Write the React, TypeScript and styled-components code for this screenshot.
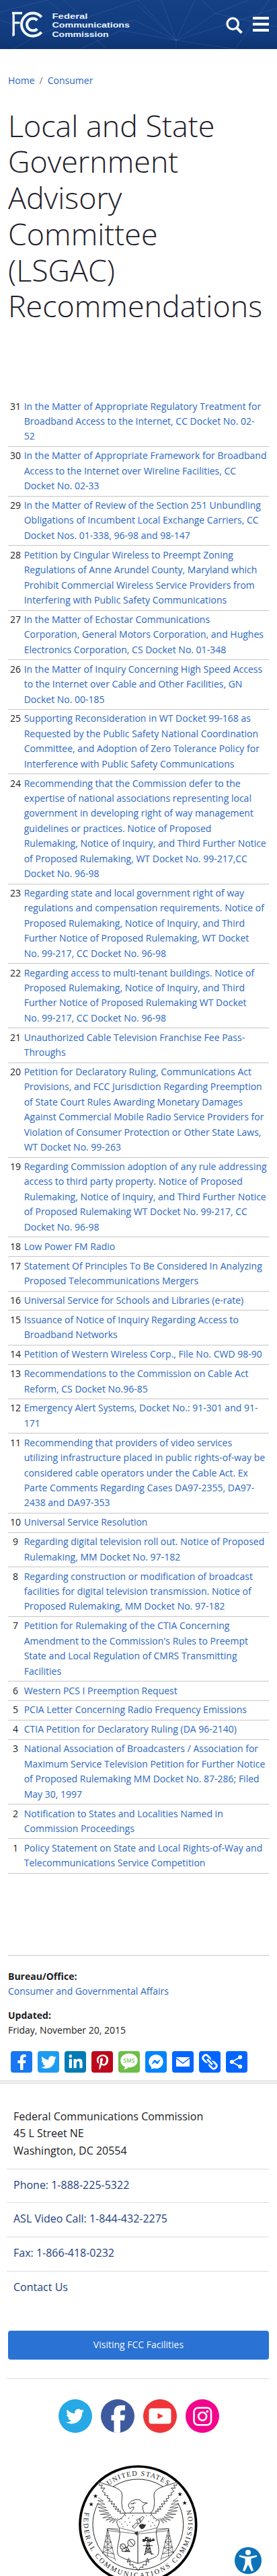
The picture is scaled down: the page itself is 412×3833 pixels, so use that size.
import React from 'react';
import styled, { createGlobalStyle } from 'styled-components';
import {
  FaFacebookF,
  FaFacebookMessenger,
  FaLinkedinIn,
  FaPinterestP,
  FaTwitter,
} from 'react-icons/fa';

const colors = {
  link: '#2d68c2',
  navy: '#1d3f82',
  text: '#1b1b1e',
  rule: '#c6c6c6',
  softRule: '#dcdcdc',
  button: '#2a72d4',
};

const GlobalStyle = createGlobalStyle`
  * { box-sizing: border-box; }
  body {
    margin: 0;
    background: #fff;
    color: ${colors.text};
    font: 400 14px/22.4px 'Open Sans', sans-serif;
  }
  a { color: inherit; text-decoration: none; }
`;

const Page = styled.div`
  position: relative;
  height: 3833px;
  overflow: hidden;
`;

const Header = styled.header`
  position: relative;
  display: flex;
  align-items: flex-start;
  height: 73px;
  padding: 17px 12px 0 17px;
  background: linear-gradient(#154084 0%, #123c80 70%, #0d3470 100%);
  color: #fff;
`;

const HeaderPattern = styled.svg`
  position: absolute;
  inset: 0;
  width: 100%;
  height: 100%;
`;

const Logo = styled.svg`
  position: relative;
  width: 180px;
  height: 40px;
  text {
    font: 700 11.5px 'Liberation Sans', sans-serif;
    fill: #e9f3ff;
  }
`;

const HeaderActions = styled.div`
  position: relative;
  display: flex;
  gap: 15px;
  margin: 8px 0 0 auto;
`;

const SearchIcon = styled.svg`
  width: 25px;
  height: 26px;
`;

const MenuButton = styled.div`
  display: grid;
  gap: 5px;
  width: 24px;
  height: 22px;
`;

const MenuBar = styled.span`
  height: 4px;
  background: #fff;
`;

const Main = styled.main`
  padding: 36px 12px 0;
`;

const Breadcrumb = styled.nav`
  display: flex;
  gap: 7px;
  color: ${colors.link};
  span { color: #777; }
`;

const Title = styled.h1`
  margin: 28.2px 0 109px;
  font-size: 44.8px;
  font-weight: 300;
  line-height: 53.76px;
  color: #1f202b;
`;

const List = styled.div`
  display: flex;
  flex-direction: column;
`;

const Row = styled.div`
  display: grid;
  grid-template-columns: 22px 1fr;
  column-gap: 1.7px;
  padding: 2.4px 3px 3.15px 0;
  border-bottom: 1px solid ${colors.rule};
`;

const RowNumber = styled.span`
  text-align: center;
`;

const RowLink = styled.a`
  white-space: pre-line;
  color: ${colors.link};
`;

const Details = styled.section`
  display: grid;
  gap: 13.4px;
  margin-top: 121px;
  padding-top: 20px;
  border-top: 1px solid ${colors.rule};
`;

const Detail = styled.div`
  strong { display: block; }
  a { color: ${colors.link}; }
`;

const ShareRow = styled.div`
  display: flex;
  gap: 8px;
  margin: 19.2px 4px 0;
  padding-bottom: 12px;
`;

const ShareTile = styled.a<{ $color: string }>`
  display: grid;
  place-items: center;
  width: 32px;
  height: 32px;
  border-radius: 4px;
  background: ${(p) => p.$color};
  color: #fff;
`;

const TileArt = styled.svg`
  width: 32px;
  height: 32px;
  text { font: 600 8px 'Open Sans', sans-serif; }
`;

const Footer = styled.footer`
  padding: 24.5px 12px 0;
  border-top: 4px double #c9c9c9;
`;

const Contacts = styled.div`
  margin-left: -2px;
  font-size: 16px;
  line-height: 25.6px;
`;

const Address = styled.p`
  margin: 0;
  padding: 12px 10px 13.5px;
`;

const ContactLink = styled.a`
  display: block;
  padding: 11px 10px 13px;
  border-top: 1px solid ${colors.softRule};
  color: ${colors.navy};
`;

const VisitButton = styled.a`
  display: flex;
  align-items: center;
  justify-content: center;
  height: 42.4px;
  margin-top: 39px;
  border-radius: 4px;
  background: ${colors.button};
  color: #f4f8ff;
`;

const SocialRow = styled.div`
  display: flex;
  justify-content: center;
  gap: 13px;
  margin: 28.2px 0 0 -2px;
  padding: 30.7px 0 42.5px 2px;
  border-top: 1px solid ${colors.softRule};
`;

const SocialCircle = styled.a<{ $color: string }>`
  display: grid;
  place-items: center;
  width: 50px;
  height: 50px;
  border-radius: 50%;
  background: ${(p) => p.$color};
  color: #fff;
  overflow: hidden;
`;

const SocialArt = styled.svg`
  width: 50px;
  height: 50px;
`;

const SealArt = styled.svg`
  display: block;
  width: 186px;
  height: 186px;
  margin-left: 100px;
  overflow: visible;
  text {
    font-family: 'Liberation Serif', serif;
    fill: #151515;
  }
`;

const AccessButton = styled.a`
  position: absolute;
  right: 23px;
  bottom: 3px;
  width: 40px;
  height: 40px;
`;

const items: [number, string][] = [
  [31, 'In the Matter of Appropriate Regulatory Treatment for Broadband Access to the Internet, CC Docket No. 02-\n52'],
  [30, 'In the Matter of Appropriate Framework for Broadband Access to the Internet over Wireline Facilities, CC Docket No. 02-33'],
  [29, 'In the Matter of Review of the Section 251 Unbundling Obligations of Incumbent Local Exchange Carriers, CC Docket Nos. 01-338, 96-98 and 98-147'],
  [28, 'Petition by Cingular Wireless to Preempt Zoning Regulations of Anne Arundel County, Maryland which Prohibit Commercial Wireless Service Providers from Interfering with Public Safety Communications'],
  [27, 'In the Matter of Echostar Communications Corporation, General Motors Corporation, and Hughes Electronics Corporation, CS Docket No. 01-348'],
  [26, 'In the Matter of Inquiry Concerning High Speed Access to the Internet over Cable and Other Facilities, GN Docket No. 00-185'],
  [25, 'Supporting Reconsideration in WT Docket 99-168 as Requested by the Public Safety National Coordination Committee, and Adoption of Zero Tolerance Policy for Interference with Public Safety Communications'],
  [24, 'Recommending that the Commission defer to the expertise of national associations representing local government in developing right of way management guidelines or practices. Notice of Proposed Rulemaking, Notice of Inquiry, and Third Further Notice of Proposed Rulemaking, WT Docket No. 99-217,CC Docket No. 96-98'],
  [23, 'Regarding state and local government right of way regulations and compensation requirements. Notice of Proposed Rulemaking, Notice of Inquiry, and Third Further Notice of Proposed Rulemaking, WT Docket\nNo. 99-217, CC Docket No. 96-98'],
  [22, 'Regarding access to multi-tenant buildings. Notice of Proposed Rulemaking, Notice of Inquiry, and Third Further Notice of Proposed Rulemaking WT Docket\nNo. 99-217, CC Docket No. 96-98'],
  [21, 'Unauthorized Cable Television Franchise Fee Pass-Throughs'],
  [20, 'Petition for Declaratory Ruling, Communications Act Provisions, and FCC Jurisdiction Regarding Preemption of State Court Rules Awarding Monetary Damages Against Commercial Mobile Radio Service Providers for Violation of Consumer Protection or Other State Laws, WT Docket No. 99-263'],
  [19, 'Regarding Commission adoption of any rule addressing access to third party property. Notice of Proposed Rulemaking, Notice of Inquiry, and Third Further Notice of Proposed Rulemaking WT Docket No. 99-217, CC Docket No. 96-98'],
  [18, 'Low Power FM Radio'],
  [17, 'Statement Of Principles To Be Considered In Analyzing Proposed Telecommunications Mergers'],
  [16, 'Universal Service for Schools and Libraries (e-rate)'],
  [15, 'Issuance of Notice of Inquiry Regarding Access to Broadband Networks'],
  [14, 'Petition of Western Wireless Corp., File No. CWD 98-90'],
  [13, 'Recommendations to the Commission on Cable Act Reform, CS Docket No.96-85'],
  [12, 'Emergency Alert Systems, Docket No.: 91-301 and 91-171'],
  [11, 'Recommending that providers of video services utilizing infrastructure placed in public rights-of-way be considered cable operators under the Cable Act. Ex Parte Comments Regarding Cases DA97-2355, DA97-2438 and DA97-353'],
  [10, 'Universal Service Resolution'],
  [9, 'Regarding digital television roll out. Notice of Proposed Rulemaking, MM Docket No. 97-182'],
  [8, 'Regarding construction or modification of broadcast facilities for digital television transmission. Notice of Proposed Rulemaking, MM Docket No. 97-182'],
  [7, "Petition for Rulemaking of the CTIA Concerning Amendment to the Commission's Rules to Preempt State and Local Regulation of CMRS Transmitting Facilities"],
  [6, 'Western PCS I Preemption Request'],
  [5, 'PCIA Letter Concerning Radio Frequency Emissions'],
  [4, 'CTIA Petition for Declaratory Ruling (DA 96-2140)'],
  [3, 'National Association of Broadcasters / Association for Maximum Service Television Petition for Further Notice of Proposed Rulemaking MM Docket No. 87-286; Filed May 30, 1997'],
  [2, 'Notification to States and Localities Named in Commission Proceedings'],
  [1, 'Policy Statement on State and Local Rights-of-Way and Telecommunications Service Competition'],
];

function FccLogo() {
  return (
    <Logo viewBox="0 0 180 40" role="img" aria-label="FCC">
      <g fill="none" stroke="#f2faff">
        <path d="M1 2.5H16M3.2 1V35.5M3 16.8H12.5" strokeWidth="3.3" />
        <path d="M1.6 37.5V32H4.9V35.6Z" fill="#f2faff" stroke="none" />
        <path d="M44.7 8.3A17 17 0 1 0 44.7 30.9" strokeWidth="4" />
        <path d="M38.4 13.2A9 9 0 1 0 38.4 26" strokeWidth="4" />
      </g>
      <text x="60.5" y="11" textLength="53" lengthAdjust="spacingAndGlyphs">Federal</text>
      <text x="60.5" y="24.3" textLength="115.5" lengthAdjust="spacingAndGlyphs">Communications</text>
      <text x="60.5" y="38" textLength="84" lengthAdjust="spacingAndGlyphs">Commission</text>
    </Logo>
  );
}

function SealHalf() {
  return (
    <g fill="none" stroke="#1a1a1a" strokeWidth="2.6">
      <path d="M104 91L163 109Q211 124 209 150Q204 184 210 208Q214 220 224 229" />
      <path d="M104 91L108 106L121 104L114 118L132 117L120 132L133 139L130 149L146 151L142 162L155 165L149 176L165 176L160 189L176 188L169 201L185 200L178 213L194 210L188 222L202 219L199 230L224 229" />
      <path
        d="M103 160L125 176L100 173L132 190L98 188L138 205L101 203L145 218L105 219L151 229L111 235L158 237L122 251L165 246L136 261L172 252L151 269L180 254L165 274L190 252"
        strokeWidth="1.8"
      />
      <path d="M224 229Q211 254 187 261Q181 272 196 295Q202 320 195 350Q182 400 192 417Q198 428 279 454" />
      <path d="M140 298L196 307M140 307L279 322M146 298L192 300M196 295L279 315" strokeWidth="1.8" />
      <path
        d="M144 300L122 410M144 300L179 441M144 300V424M137 330H153M132 356L160 358M127 381L166 384M122 404L172 412M137 330L160 358L127 381L172 412M153 330L132 356L166 384L122 404M130 414L177 433"
        strokeWidth="1.8"
      />
      <path d="M238 431L231 448L244 445L243 462L257 458L259 473L269 470L280 486" />
      <path d="M238 431L244 439" />
    </g>
  );
}

const stars = [
  [90, 153],
  [71, 190],
  [467, 145],
  [488, 184],
];
const shieldDots = [
  [207, 255], [224, 240], [239, 252], [222, 268], [244, 270], [207, 278], [256, 240], [232, 283],
  [255, 286], [213, 290], [318, 241], [336, 240], [349, 253], [327, 265], [346, 272], [361, 263],
  [314, 282], [337, 287], [354, 284], [198, 268],
];

function Seal() {
  return (
    <SealArt viewBox="0 0 558 558" role="img" aria-label="Commission seal">
      <defs>
        <path id="arcTop" d="M62 280A218 218 0 0 1 498 280" />
        <path id="arcBottom" d="M43 222A243 243 0 1 0 518 222" />
      </defs>
      <circle cx="280" cy="280" r="259" fill="#fff" stroke="#000" strokeWidth="11" />
      <circle cx="280" cy="280" r="202" fill="none" stroke="#111" strokeWidth="2.8" />
      <path d="M104 91L163 109L208 132L125 175L85 190L98 140Z M456 91L397 109L352 132L435 175L475 190L462 140Z" fill="#fff" />
      <text fontSize="31" textAnchor="middle">
        <textPath href="#arcTop" startOffset="50%" textLength="282">UNITED STATES</textPath>
      </text>
      <text fontSize="31">
        <textPath href="#arcBottom" startOffset="3" textLength="872">FEDERAL COMMUNICATIONS COMMISSION</textPath>
      </text>
      <SealHalf />
      <g transform="translate(560 0) scale(-1 1)">
        <SealHalf />
      </g>
      <path
        d="M224 229H336M243 228Q263 212 261 202Q250 200 245 210Q237 203 237 193Q243 174 270 169Q291 166 300 182L322 184Q303 190 300 201Q301 215 307 228M246 188L262 187L258 183M262 183L269 184"
        fill="none"
        stroke="#1a1a1a"
        strokeWidth="2.6"
      />
      {stars.map(([x, y]) => (
        <path
          key={x}
          transform={`translate(${x} ${y})`}
          d="M0-10L2.5-3H10L4 1.5L6.5 9L0 4.5L-6.5 9L-4 1.5L-10-3H-2.5Z"
          fill="#111"
        />
      ))}
      {shieldDots.map(([x, y]) => (
        <circle key={`${x}-${y}`} cx={x} cy={y} r="2.1" fill="#222" />
      ))}
      <g fill="#fff" stroke="#151515" strokeWidth="2.4">
        <path d="M284 260L299 243L307 250L291 268Z M255 291L272 272L280 280L263 298Z M274 259L287 253L294 270L281 277Z" />
        <path d="M285 288Q286 278 302 279L312 283Q309 300 294 299Z" fill="#333" />
        <path d="M279 315V454" strokeWidth="3" />
        <path d="M262 318L280 309L276 330Z" fill="#333" stroke="none" />
      </g>
      <g fill="none" stroke="#151515" strokeWidth="2.8">
        <circle cx="212" cy="378" r="12" />
        <circle cx="250" cy="362" r="16" />
        <path d="M203 370L220 387M240 350L261 374M220 386L230 381M240 372L229 380M231 380L222 403M231 380L243 403M226 392L239 402M238 392L224 402M209 390V400H245" />
        <path d="M324 345L310 416M324 345L341 416M318 372H330M315 388H334M312 402H337M318 372L334 388L312 402M330 372L315 388L337 402M303 374H345M306 416L324 404L350 413" />
        <path d="M324 358V335M306 352H345M313 337V353M334 340V355" strokeWidth="3.5" />
      </g>
      <g fill="#333">
        <circle cx="306" cy="351" r="7" />
        <circle cx="317" cy="340" r="5" />
        <circle cx="334" cy="352" r="7" />
        <circle cx="348" cy="349" r="6" />
      </g>
    </SealArt>
  );
}

export default function App() {
  return (
    <Page>
      <GlobalStyle />
      <Header>
        <HeaderPattern viewBox="0 0 412 73" aria-hidden>
          <path
            d="M0 18L70 0L160 73M20 73L60 50L205 0M60 50L0 30M205 0L262 60L320 20L412 40M262 60L180 45L120 73M262 60V73M262 60L200 30L140 42L95 0M262 60L240 0M262 60L290 0M262 60L350 73L400 0M320 20L300 0M320 20L370 0M205 8L262 60L412 12"
            fill="none"
            stroke="#86aee0"
            strokeOpacity=".16"
          />
        </HeaderPattern>
        <FccLogo />
        <HeaderActions>
          <SearchIcon viewBox="0 0 25 26" fill="none" stroke="#fff">
            <circle cx="10.2" cy="10.4" r="8.2" strokeWidth="3.2" />
            <path d="M15.8 16.2L23.4 23.8" strokeWidth="4" />
          </SearchIcon>
          <MenuButton>
            <MenuBar />
            <MenuBar />
            <MenuBar />
          </MenuButton>
        </HeaderActions>
      </Header>

      <Main>
        <Breadcrumb>
          <a>Home</a>
          <span>/</span>
          <a>Consumer</a>
        </Breadcrumb>
        <Title>Local and State Government Advisory Committee (LSGAC) Recommendations</Title>
        <List>
          {items.map(([n, label]) => (
            <Row key={n}>
              <RowNumber>{n}</RowNumber>
              <RowLink>{label}</RowLink>
            </Row>
          ))}
        </List>
        <Details>
          <Detail>
            <strong>Bureau/Office:</strong>
            <a>Consumer and Governmental Affairs</a>
          </Detail>
          <Detail>
            <strong>Updated:</strong>
            Friday, November 20, 2015
          </Detail>
        </Details>
        <ShareRow>
          <ShareTile $color="#1877f2">
            <FaFacebookF size={23} />
          </ShareTile>
          <ShareTile $color="#1d9bf0">
            <FaTwitter size={23} />
          </ShareTile>
          <ShareTile $color="#007bb5">
            <FaLinkedinIn size={23} />
          </ShareTile>
          <ShareTile $color="#bd081c">
            <FaPinterestP size={23} />
          </ShareTile>
          <ShareTile $color="#6cbe45">
            <TileArt viewBox="0 0 32 32">
              <path
                d="M16 3.5C8.8 3.5 3.3 8 3.3 14c0 4.5 2.7 7.7 6.6 9.3 0 1.7-.8 3-2.1 4 3 0 5.4-1.3 7-3C22.5 24.7 28.7 20.5 28.7 14 28.7 8 23.2 3.5 16 3.5Z"
                fill="#fff"
              />
              <text x="16" y="17" textAnchor="middle" fill="#6cbe45" textLength="17">SMS</text>
            </TileArt>
          </ShareTile>
          <ShareTile $color="#0084ff">
            <FaFacebookMessenger size={22} />
          </ShareTile>
          <ShareTile $color="#0166ff">
            <TileArt viewBox="0 0 32 32">
              <rect x="6" y="9" width="20" height="14" rx="1" fill="#fff" />
              <path d="M6 10.5L16 18L26 10.5" fill="none" stroke="#0166ff" strokeWidth="1.5" />
            </TileArt>
          </ShareTile>
          <ShareTile $color="#0166ff">
            <TileArt viewBox="0 0 32 32">
              <g transform="rotate(45 16 16)" fill="none" stroke="#fff" strokeWidth="2.8">
                <rect x="3.5" y="11.8" width="11" height="8.4" rx="3.5" />
                <rect x="17.5" y="11.8" width="11" height="8.4" rx="3.5" />
                <path d="M11.5 16H20.5" stroke="#0166ff" strokeWidth="6" />
                <path d="M10.5 16H21.5" />
              </g>
            </TileArt>
          </ShareTile>
          <ShareTile $color="#0166ff">
            <TileArt viewBox="0 0 32 32">
              <path d="M21.2 9L8.8 16L21.2 23" fill="none" stroke="#fff" strokeWidth="1.8" />
              <g fill="#fff">
                <circle cx="21.2" cy="9" r="3" />
                <circle cx="8.8" cy="16" r="3" />
                <circle cx="21.2" cy="23" r="3" />
              </g>
            </TileArt>
          </ShareTile>
        </ShareRow>
      </Main>

      <Footer>
        <Contacts>
          <Address>
            Federal Communications Commission
            <br />
            45 L Street NE
            <br />
            Washington, DC 20554
          </Address>
          <ContactLink>Phone: 1-888-225-5322</ContactLink>
          <ContactLink>ASL Video Call: 1-844-432-2275</ContactLink>
          <ContactLink>Fax: 1-866-418-0232</ContactLink>
          <ContactLink>Contact Us</ContactLink>
        </Contacts>
        <VisitButton>Visiting FCC Facilities</VisitButton>
        <SocialRow>
          <SocialCircle $color="#26a9e6">
            <FaTwitter size={27} />
          </SocialCircle>
          <SocialCircle $color="#3d5a9e">
            <SocialArt viewBox="0 0 50 50">
              <path
                d="M19.5 50V31.5H15.5V23.5H19.5V19C19.5 12.5 23.5 9 29.5 9H36V16.5H32C29.7 16.5 29 17.7 29 19.8V23.5H36L35 31.5H29V50Z"
                fill="#fff"
              />
            </SocialArt>
          </SocialCircle>
          <SocialCircle $color="#ee3537">
            <SocialArt viewBox="0 0 50 50">
              <rect x="8.5" y="13.5" width="33" height="23" rx="4" fill="#fff" />
              <path d="M21.5 20.5L30 25L21.5 29.5Z" fill="#ee3537" />
            </SocialArt>
          </SocialCircle>
          <SocialCircle $color="#f2058b">
            <SocialArt viewBox="0 0 50 50" fill="none" stroke="#fff" strokeWidth="2.6">
              <rect x="12.5" y="12.8" width="25.5" height="25.5" rx="6" />
              <circle cx="25.2" cy="25.5" r="6" />
              <circle cx="32.3" cy="18.3" r="1.8" fill="#fff" stroke="none" />
            </SocialArt>
          </SocialCircle>
        </SocialRow>
        <Seal />
      </Footer>

      <AccessButton aria-label="Accessibility">
        <svg viewBox="0 0 40 40" width="40" height="40">
          <circle cx="20" cy="20" r="20" fill="#0d73b9" />
          <circle cx="20" cy="8" r="4" fill="#fff" />
          <path
            d="M7 12L17 14H23L33 12V14.5L24.5 17V24L28 35L25 36L20 26L15 36L12 35L15.5 24V17L7 14.5Z"
            fill="#fff"
          />
        </svg>
      </AccessButton>
    </Page>
  );
}
